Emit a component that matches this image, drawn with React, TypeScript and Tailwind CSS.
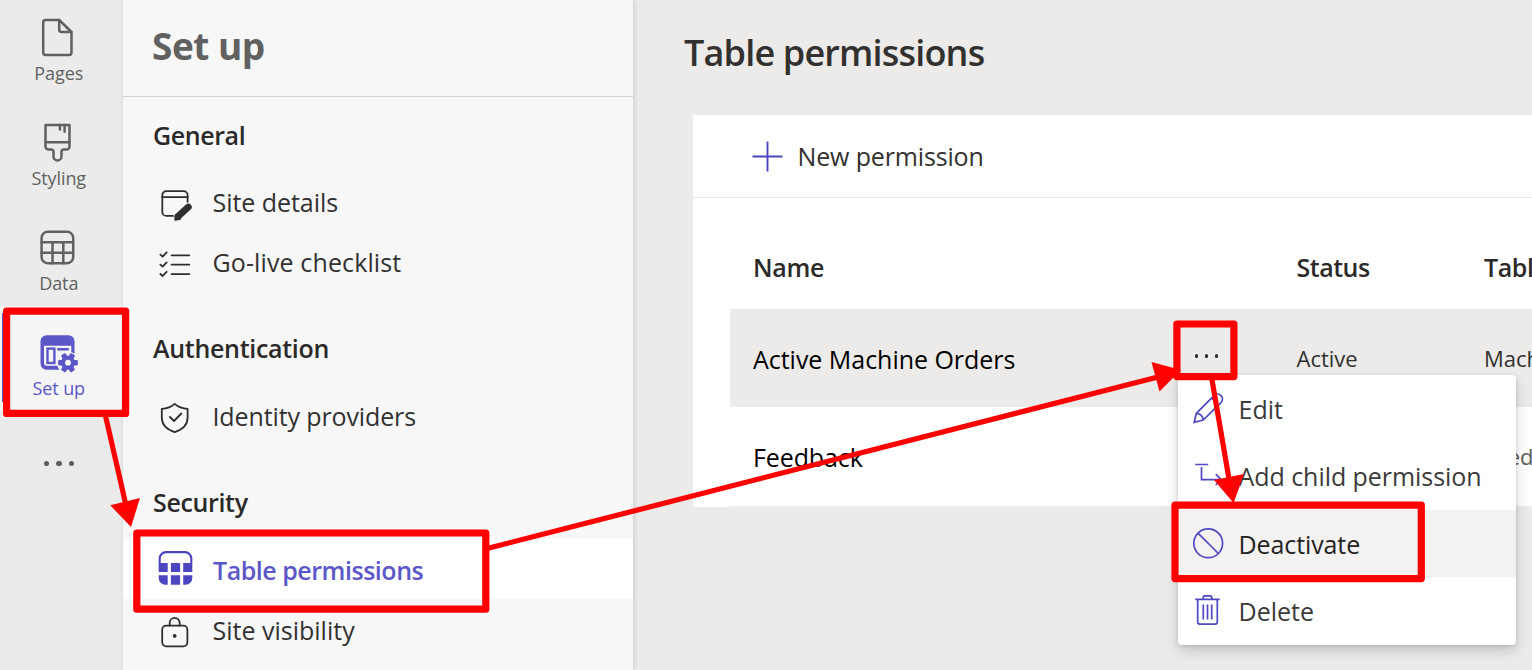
import type { ReactNode } from "react";

/* ---------- icons ---------- */

function RailSvg({ children }: { children: ReactNode }) {
  return (
    <svg width="40" height="40" viewBox="0 0 40 40" fill="none" stroke="currentColor" strokeWidth="2.5" strokeLinejoin="round" strokeLinecap="round" className="shrink-0 overflow-visible">
      {children}
    </svg>
  );
}

function PagesIcon() {
  return (
    <RailSvg>
      <path d="M6.6 2h13.6l12.3 12v20.6a2.4 2.4 0 0 1-2.4 2.4H6.6a2.4 2.4 0 0 1-2.4-2.4V4.400a2.4 2.4 0 0 1 2.4-2.4z" />
      <path d="M20.2 2v9.800a2.2 2.2 0 0 0 2.2 2.200h10" />
    </RailSvg>
  );
}

function StylingIcon() {
  return (
    <RailSvg>
      <path d="M6.500 2h24v21.400a3 3 0 0 1-3 3h-2.600a2.400 2.400 0 0 0-2.400 2.400v4.600a4 4 0 0 1-8 0v-4.600a2.400 2.400 0 0 0-2.400-2.400H9.500a3 3 0 0 1-3-3z" />
      <path d="M6.500 19.200h24M20.900 2v4.600M25.600 2v6.800" />
    </RailSvg>
  );
}

function DataIcon() {
  return (
    <RailSvg>
      <rect x="2.600" y="3.800" width="31.600" height="31.400" rx="6" />
      <path d="M2.600 14.200h31.600M2.600 24.800h31.600M13.500 14.200v21M24.300 14.200v21" />
    </RailSvg>
  );
}

function SetupIcon() {
  return (
    <svg width="40" height="40" viewBox="0 0 40 40" className="shrink-0 overflow-visible">
      <rect x="1.500" y="2.300" width="34" height="34.400" rx="6" fill="#5b57c9" />
      <path d="M5 12.800h27.300v20H8a3 3 0 0 1-3-3z" fill="#f5f5f5" />
      <rect x="8.500" y="15.600" width="6.900" height="14.400" fill="none" stroke="#5b57c9" strokeWidth="2.400" />
      <path d="M19.200 16.200h9.600" stroke="#5b57c9" strokeWidth="2.400" strokeLinecap="round" />
      <circle cx="29" cy="29.700" r="11" fill="#f5f5f5" />
      <g transform="translate(29 29.700)">
        <rect x="-9.900" y="-2.700" width="19.800" height="5.400" rx="1.400" fill="#5b57c9" />
        <rect x="-9.900" y="-2.700" width="19.800" height="5.400" rx="1.400" fill="#5b57c9" transform="rotate(60)" />
        <rect x="-9.900" y="-2.700" width="19.800" height="5.400" rx="1.400" fill="#5b57c9" transform="rotate(120)" />
        <circle r="7" fill="#5b57c9" />
        <circle r="2.900" fill="#f5f5f5" />
      </g>
    </svg>
  );
}

function NavSvg({ children }: { children: ReactNode }) {
  return (
    <svg width="36" height="36" viewBox="0 0 36 36" fill="none" stroke="#2f2e2d" strokeWidth="1.800" strokeLinejoin="round" strokeLinecap="round" className="shrink-0 overflow-visible">
      {children}
    </svg>
  );
}

function SiteDetailsIcon() {
  return (
    <NavSvg>
      <path d="M16 32.900H9.300a4 4 0 0 1-4-4V12.200a4 4 0 0 1 4-4h17.300a4 4 0 0 1 4 4v6.600" />
      <path d="M5.300 14.200h25.300" />
      <path d="M21 33.600l10.300-9.600" stroke="#2f2e2d" strokeWidth="6.800" />
      <path d="M18.200 36.800l.6-5 4.400 4z" fill="#2f2e2d" />
    </NavSvg>
  );
}

function ChecklistIcon() {
  return (
    <NavSvg>
      <path d="M14.600 12.300h17.700M14.600 21.700h17.700M14.600 31.100h17.700" />
      <path d="M3.400 11.600l2.200 2 4-4.200M3.400 21.600l2.200 2 4-4.200M3.400 31l2.200 2 4-4.200" />
    </NavSvg>
  );
}

function ShieldIcon() {
  return (
    <NavSvg>
      <path d="M17.700 6.900c3.600 3.200 7.600 4.700 12.900 4.900v8.700c0 7.300-4.500 11.900-12.900 14.600-8.400-2.700-12.900-7.300-12.900-14.600v-8.700c5.300-.2 9.300-1.700 12.900-4.900z" />
      <path d="M12.900 20l4.100 4 7.300-7.500" />
    </NavSvg>
  );
}

function TablePermissionsIcon() {
  return (
    <svg width="36" height="36" viewBox="0 0 36 36" fill="#4b45c0" className="shrink-0 overflow-visible">
      <path d="M2.700 12.500V7.400a6.300 6.300 0 0 1 6.300-6.300h19a6.300 6.300 0 0 1 6.300 6.300v5.100" fill="none" stroke="#4b45c0" strokeWidth="2.100" />
      <path d="M1.700 12.100h9v8.900h-9zM13.900 12.100h9.200v8.900h-9.200zM26.200 12.100h9.100v8.900h-9.100z" />
      <path d="M1.700 24.200h9v9.500H8.400a6.700 6.700 0 0 1-6.700-6.700zM13.900 24.200h9.200v9.500h-9.200zM26.200 24.200h9.100V27a6.700 6.700 0 0 1-6.700 6.700h-2.400z" />
    </svg>
  );
}

function LockIcon() {
  return (
    <NavSvg>
      <rect x="5.200" y="14.700" width="25.200" height="20.600" rx="4" />
      <path d="M12.700 14.500v-2.600a5 5 0 0 1 10 0v2.600" />
      <circle cx="17.700" cy="24.900" r="1.900" fill="#2f2e2d" stroke="none" />
    </NavSvg>
  );
}

function MenuSvg({ children }: { children: ReactNode }) {
  return (
    <svg width="32" height="32" viewBox="0 0 32 32" fill="none" stroke="#4f48c4" strokeWidth="1.700" strokeLinejoin="miter" className="shrink-0 overflow-visible">
      {children}
    </svg>
  );
}

function EditIcon() {
  return (
    <MenuSvg>
      <path d="M2.200 29.300l2.200-9L22 2.600a4.800 4.800 0 0 1 7 7L11.200 27z" />
      <path d="M4.400 20.300c4 .3 6.500 2.700 6.800 6.700M19.600 5l7 7" />
    </MenuSvg>
  );
}

function ChildIcon() {
  return (
    <MenuSvg>
      <path d="M3.200 4.500h13M9.500 7v12.600h19.700M23.800 14.200l5.400 5.400-5.400 5.400" />
    </MenuSvg>
  );
}

function BlockIcon() {
  return (
    <MenuSvg>
      <circle cx="16.200" cy="15.300" r="14.400" />
      <path d="M6 5.100l20.400 20.400" />
    </MenuSvg>
  );
}

function TrashIcon() {
  return (
    <MenuSvg>
      <path d="M3.200 4.400h24.600M11.200 4.200V2.400a1.500 1.500 0 0 1 1.500-1.500h5.600a1.500 1.500 0 0 1 1.500 1.500v1.800" />
      <path d="M5.700 4.400v22.700a2 2 0 0 0 2 2h15.600a2 2 0 0 0 2-2V4.400M11.300 9.400v15M15.500 9.400v15M19.700 9.400v15" />
    </MenuSvg>
  );
}

/* ---------- left rail ---------- */

function RailItem({ icon, label, active }: { icon: ReactNode; label: string; active?: boolean }) {
  return (
    <div className={active ? "flex h-[105px] w-full bg-[#f5f5f5] text-[#5b57c9]" : "flex h-[105px] w-full text-[#616161]"}>
      {active && <span className="mt-[7px] ml-[2px] h-[89px] w-[2px] bg-[#5b57c9]" />}
      <div className={active ? "flex w-[109.500px] flex-col items-center pt-[27px]" : "flex w-[117.500px] flex-col items-center pt-[27px]"}>
        <div className={active ? "ml-[1px]" : "ml-[0.500px]"}>{icon}</div>
        <span className="mt-[5px] text-[18px] leading-[20px] tracking-[-0.100px]">{label}</span>
      </div>
    </div>
  );
}

function Rail() {
  return (
    <nav className="flex h-full w-[123px] shrink-0 flex-col bg-[#ebebeb]">
      <div className="-mt-[9px] flex flex-col">
        <RailItem icon={<PagesIcon />} label="Pages" />
        <RailItem icon={<StylingIcon />} label="Styling" />
        <RailItem icon={<DataIcon />} label="Data" />
        <RailItem icon={<SetupIcon />} label="Set up" active />
      </div>
      <div className="flex h-[105px] w-[118px] justify-center gap-[7.300px] pt-[49.500px]">
        <span className="size-[5.400px] rounded-full bg-[#5c5c5c]" />
        <span className="size-[5.400px] rounded-full bg-[#5c5c5c]" />
        <span className="size-[5.400px] rounded-full bg-[#5c5c5c]" />
      </div>
    </nav>
  );
}

/* ---------- set up panel ---------- */

function SectionHeading({ children, className }: { children: ReactNode; className: string }) {
  return <h2 className={`flex shrink-0 items-center pl-[30px] text-[25px] leading-[34px] font-semibold text-[#2b2a29] ${className}`}>{children}</h2>;
}

function NavRow({ icon, label, className = "" }: { icon: ReactNode; label: string; className?: string }) {
  return (
    <div className="flex h-[60px] shrink-0 items-center gap-[19.500px] pl-[34px]">
      {icon}
      <span className={`pt-[2px] text-[25px] leading-[34px] text-[#323130] ${className}`}>{label}</span>
    </div>
  );
}

function SetupPanel() {
  return (
    <aside className="z-10 flex h-full w-[510px] shrink-0 flex-col overflow-hidden bg-[#f7f7f7] shadow-[1px_0_5px_rgba(0,0,0,0.15)]">
      <header className="flex h-[97px] shrink-0 items-center border-b border-[#d1d1d1] pb-[5px] pl-[29px]">
        <h1 className="text-[37px] leading-[50px] font-bold tracking-[-0.500px] text-[#616161]">Set up</h1>
      </header>
      <SectionHeading className="h-[74px] pt-[1px] tracking-[-0.400px]">General</SectionHeading>
      <NavRow icon={<SiteDetailsIcon />} label="Site details" className="tracking-[-0.050px]" />
      <NavRow icon={<ChecklistIcon />} label="Go-live checklist" className="tracking-[0.120px]" />
      <SectionHeading className="h-[94px] pt-[19px] tracking-[-0.300px]">Authentication</SectionHeading>
      <NavRow icon={<ShieldIcon />} label="Identity providers" className="tracking-[-0.120px]" />
      <SectionHeading className="h-[94px] pt-[19px] tracking-[-0.350px]">Security</SectionHeading>
      <div className="flex h-[60px] shrink-0 items-center gap-[20px] rounded-[4px] bg-white pl-[34px]">
        <TablePermissionsIcon />
        <span className="pt-[2px] text-[25px] leading-[34px] font-semibold tracking-[-0.470px] text-[#5b57c9]">Table permissions</span>
      </div>
      <NavRow icon={<LockIcon />} label="Site visibility" />
    </aside>
  );
}

/* ---------- main area ---------- */

function TableCard() {
  return (
    <section className="ml-[60px] h-[392px] w-[839px] bg-white">
      <div className="flex h-[83px] items-center border-b border-[#e8e7e6] pl-[59px]">
        <svg width="31" height="31" viewBox="0 0 31 31" className="shrink-0">
          <path d="M0.500 15.500h30M15.500 0.500v30" stroke="#4b45c0" strokeWidth="1.900" />
        </svg>
        <span className="pb-[1px] pl-[14.500px] text-[25px] leading-[34px] tracking-[-0.150px] text-[#323130]">New permission</span>
      </div>
      <div className="grid grid-cols-[543.500px_187.500px_1fr] pt-[52px] pb-[25px] pl-[60px] text-[25px] leading-[34px] font-semibold text-[#2b2a29]">
        <span className="tracking-[-0.300px]">Name</span>
        <span className="tracking-[-0.500px]">Status</span>
        <span className="tracking-[-0.400px]">Table</span>
      </div>
      <div className="ml-[37px] grid h-[98px] grid-cols-[439px_104.500px_187.500px_1fr] items-center bg-[#ecebe9] pl-[23px] text-[#323130]">
        <span className="pt-[2px] text-[25px] leading-[34px] tracking-[-0.030px] text-black">Active Machine Orders</span>
        <span className="flex gap-[6.600px] pb-[4px] pl-[3px]">
          <i className="size-[3.200px] rounded-full bg-[#2b2a29]" />
          <i className="size-[3.200px] rounded-full bg-[#2b2a29]" />
          <i className="size-[3.200px] rounded-full bg-[#2b2a29]" />
        </span>
        <span className="text-[22px] leading-[30px]">Active</span>
        <span className="overflow-hidden text-[22px] leading-[30px] whitespace-nowrap">Machine</span>
      </div>
      <div className="ml-[37px] grid h-[100px] grid-cols-[731px_1fr] items-center border-b border-[#ecebe9] pl-[23px] text-[#605e5c]">
        <span className="text-[25px] leading-[34px] tracking-[-0.100px] text-black">Feedback</span>
        <span className="overflow-hidden pb-[1px] text-[22px] leading-[30px]">Feed</span>
      </div>
    </section>
  );
}

function MenuItem({ icon, label, hovered, className = "pt-[1px]" }: { icon: ReactNode; label: string; hovered?: boolean; className?: string }) {
  return (
    <div className={hovered ? "flex h-[67px] items-center gap-[14.500px] bg-[#f3f2f1] pl-[14px]" : "flex h-[67.500px] items-center gap-[14.500px] pl-[14px]"}>
      {icon}
      <span className={`text-[25px] leading-[34px] ${hovered ? "text-[#242322]" : "text-[#3b3a39]"} ${className}`}>{label}</span>
    </div>
  );
}

function ContextMenu() {
  return (
    <div className="absolute top-[375px] left-[1178px] z-20 flex h-[270px] w-[338px] flex-col rounded-[4px] bg-white shadow-[0_6px_14px_rgba(0,0,0,0.16),0_1px_4px_rgba(0,0,0,0.13)]">
      <MenuItem icon={<EditIcon />} label="Edit" />
      <MenuItem icon={<ChildIcon />} label="Add child permission" className="pb-[1px] tracking-[-0.050px]" />
      <MenuItem icon={<BlockIcon />} label="Deactivate" hovered className="pt-[1px] tracking-[-0.100px]" />
      <MenuItem icon={<TrashIcon />} label="Delete" />
    </div>
  );
}

/* ---------- red callouts ---------- */

function Callouts() {
  return (
    <svg width="1532" height="670" viewBox="0 0 1532 670" className="pointer-events-none absolute top-0 left-0 z-30">
      <g fill="none" stroke="#ff0000" strokeWidth="7.200" strokeLinejoin="round">
        <rect x="6.600" y="311.200" width="119" height="102.200" />
        <rect x="136.800" y="533" width="349" height="76.200" />
        <rect x="1176.900" y="324" width="57" height="52.600" />
        <rect x="1175" y="505.200" width="246.300" height="73.400" />
      </g>
      <g stroke="#ff0000" strokeWidth="5.200">
        <path d="M105.300 415l20.200 88" />
        <path d="M487 548.500L1157 377.200" />
        <path d="M1211.700 378l17.300 101" />
      </g>
      <g fill="#ff0000">
        <path d="M110.300 505.300L140 498l-9 29z" />
        <path d="M1151.500 362l8 29.600L1181 370z" />
        <path d="M1214 480l30-6-10.400 29z" />
      </g>
    </svg>
  );
}

export default function App() {
  return (
    <div className="relative flex h-[670px] w-[1532px] overflow-hidden bg-[#ecebe9] font-['Open_Sans',sans-serif]">
      <Rail />
      <SetupPanel />
      <main className="flex min-w-0 flex-1 flex-col overflow-hidden">
        <h1 className="h-[115px] shrink-0 pt-[28px] pl-[51px] text-[36px] leading-[50px] font-semibold tracking-[-0.820px] text-[#323130]">Table permissions</h1>
        <TableCard />
      </main>
      <ContextMenu />
      <Callouts />
    </div>
  );
}
